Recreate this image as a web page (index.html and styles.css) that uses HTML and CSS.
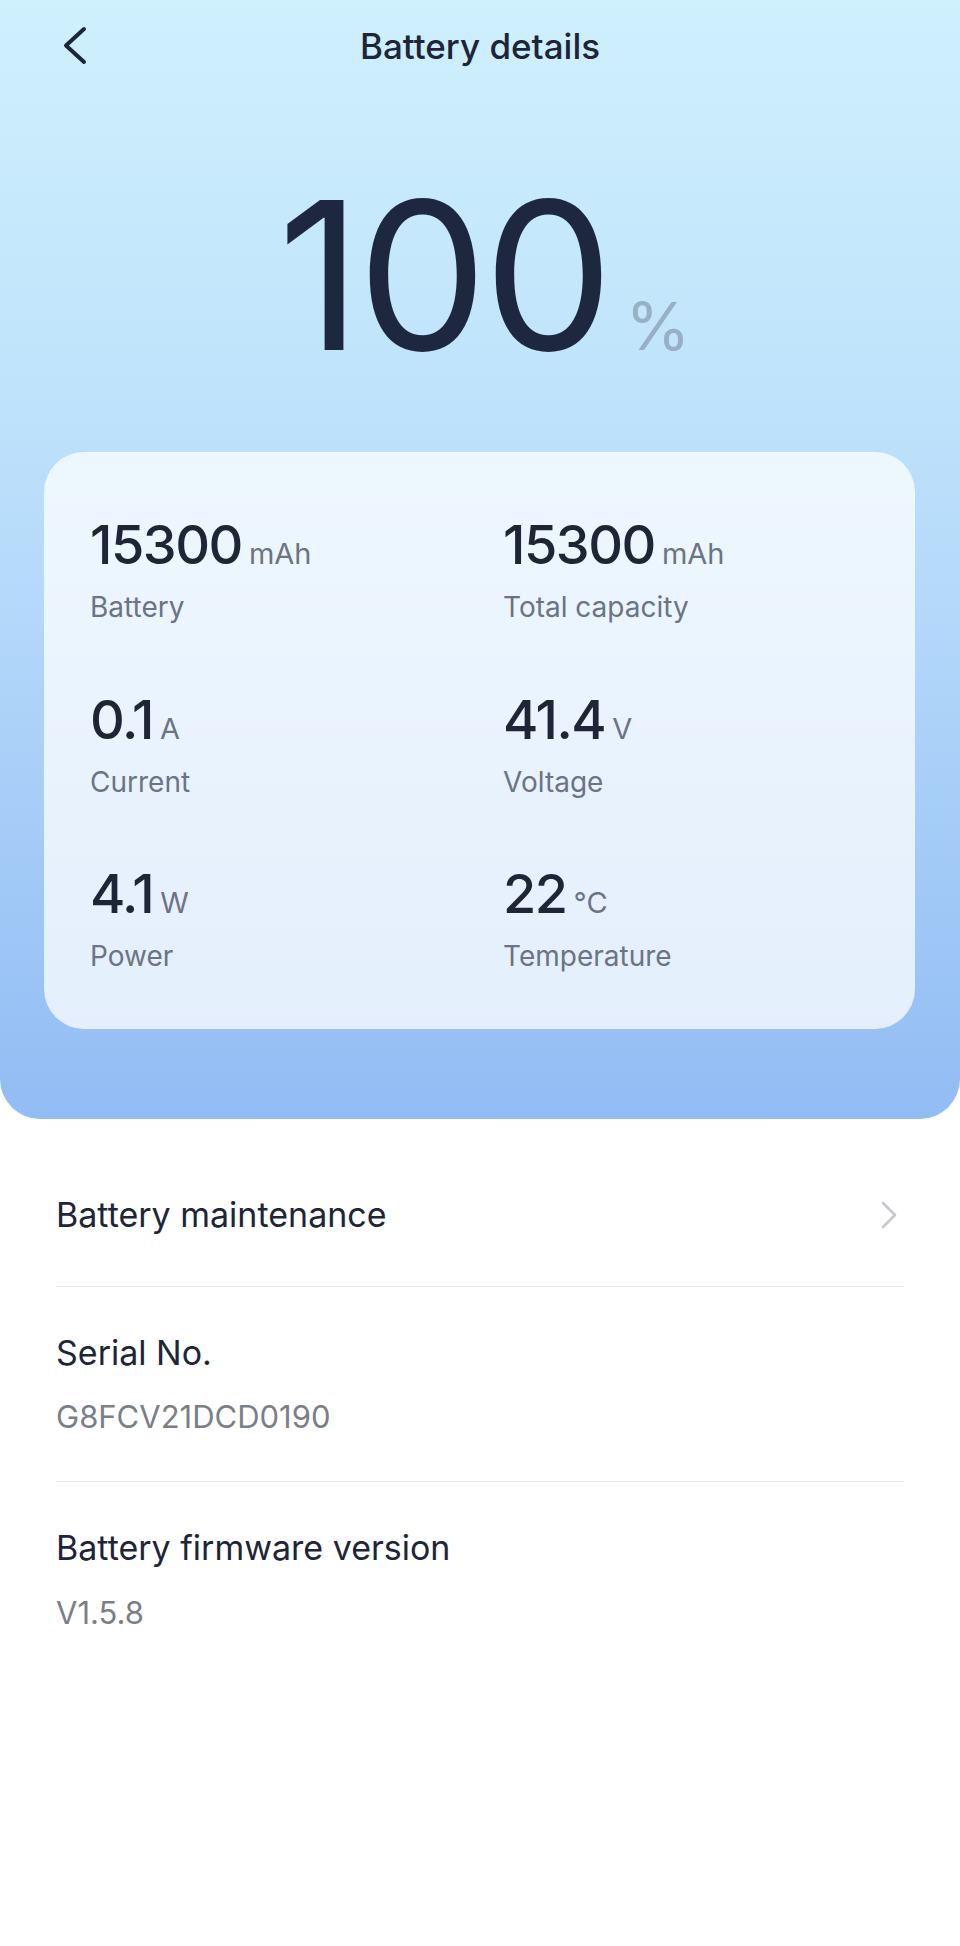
FILE: index.html
```html
<!DOCTYPE html>
<html lang="en">

<head>
    <meta charset="UTF-8">
    <title>Battery details</title>
    <link rel="stylesheet" href="styles.css">
</head>

<body>

    <div class="hero">
        <!-- top bar -->
        <div class="topbar">
            <span class="back">
                <svg width="26" height="40" viewBox="0 0 26 40">
                    <path d="M22 3 L4 19.5 L22 36" fill="none" stroke="#1d2537" stroke-width="4" stroke-linecap="round" stroke-linejoin="round" />
                </svg>
            </span>
            <h1>Battery details</h1>
        </div>

        <!-- big percentage -->
        <div class="level"><span class="num">100</span><span class="pct">%</span></div>

        <!-- stats card -->
        <div class="card">
            <div class="stat">
                <div class="val">15300<span class="unit">mAh</span></div>
                <div class="lbl">Battery</div>
            </div>
            <div class="stat">
                <div class="val">15300<span class="unit">mAh</span></div>
                <div class="lbl">Total capacity</div>
            </div>
            <div class="stat">
                <div class="val">0.1<span class="unit">A</span></div>
                <div class="lbl">Current</div>
            </div>
            <div class="stat">
                <div class="val">41.4<span class="unit">V</span></div>
                <div class="lbl">Voltage</div>
            </div>
            <div class="stat">
                <div class="val">4.1<span class="unit">W</span></div>
                <div class="lbl">Power</div>
            </div>
            <div class="stat">
                <div class="val">22<span class="unit">°C</span></div>
                <div class="lbl">Temperature</div>
            </div>
        </div>
    </div>

    <ul class="list">
        <li class="row link">
            <span class="title">Battery maintenance</span>
            <svg class="arrow" width="20" height="30" viewBox="0 0 20 30">
                <path d="M4 3 L16 15 L4 27" fill="none" stroke="#c6c8cd" stroke-width="2.6" stroke-linecap="round" stroke-linejoin="round" />
            </svg>
        </li>
        <li class="row">
            <div class="title">Serial No.</div>
            <div class="sub">G8FCV21DCD0190</div>
        </li>
        <li class="row last">
            <div class="title">Battery firmware version</div>
            <div class="sub">V1.5.8</div>
        </li>
    </ul>

</body>

</html>
```

FILE: styles.css
```css
* {
    padding: 0;
    margin: 0;
    list-style: none;
    border: 0;
    box-sizing: border-box;
}

body {
    background: #fff;
    font-family: Inter, "Noto Sans", sans-serif;
    color: #1d2537;
}

.hero {
    padding-bottom: 90px;
    background: linear-gradient(180deg, #cff0fd 0%, #bfe3fb 35%, #b3d8fa 55%, #92bcf4 100%);
    border-radius: 0 0 40px 40px;
}

.topbar {
    height: 92px;
    position: relative;
    text-align: center;
}

.topbar h1 {
    font-size: 35px;
    font-weight: 500;
    line-height: 92px;
    color: #1d2537;
}

.back {
    position: absolute;
    left: 62px;
    top: 26px;
}

.back svg {
    display: block;
}

.level {
    padding-top: 80px;
    margin-bottom: 74px;
    padding-left: 8px;
    text-align: center;
    line-height: 1;
}

.level .num {
    font-size: 206px;
    font-weight: 400;
    color: #1e2740;
    letter-spacing: -4px;
}

.level .pct {
    font-size: 66px;
    font-weight: 400;
    color: #97b0c6;
    margin-left: 16px;
}

.card {
    margin: 0 45px 0 44px;
    padding: 66px 0 55px 46px;
    background: rgba(255, 255, 255, 0.74);
    border-radius: 40px;
    display: grid;
    grid-template-columns: 413px 1fr;
    row-gap: 68px;
}

.stat .val {
    font-size: 54px;
    font-weight: 500;
    line-height: 1;
    color: #1d2537;
    letter-spacing: -1.5px;
}

.stat .unit {
    font-size: 29px;
    font-weight: 400;
    color: #6c7384;
    margin-left: 7px;
    letter-spacing: 0;
}

.stat .lbl {
    margin-top: 19px;
    font-size: 28px;
    line-height: 1.2;
    color: #6c7384;
}

.list {
    margin-top: 30px;
    padding: 0 56px;
}

.row {
    padding: 44px 0;
    border-bottom: 1px solid #e6e6e8;
}

.row.last {
    border-bottom: 0;
}

.row.link {
    display: flex;
    align-items: center;
    justify-content: space-between;
    padding-bottom: 49px;
}

.row .title {
    font-size: 34px;
    line-height: 1.3;
    color: #1d2537;
}

.row .sub {
    margin-top: 22px;
    font-size: 31px;
    line-height: 1.3;
    color: #7a7e87;
}

.arrow {
    margin-right: 5px;
}
```
